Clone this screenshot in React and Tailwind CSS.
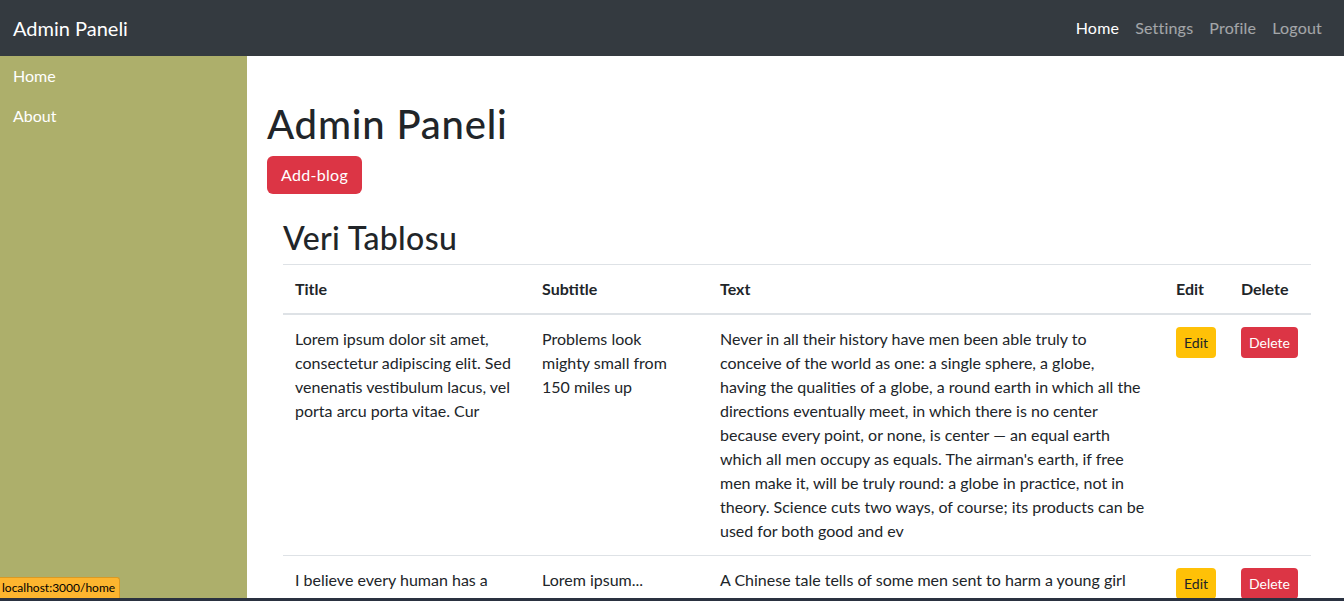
import React from 'react';

const rows = [
  {
    title: ['Lorem ipsum dolor sit amet,', 'consectetur adipiscing elit. Sed', 'venenatis vestibulum lacus, vel', 'porta arcu porta vitae. Cur'],
    subtitle: ['Problems look', 'mighty small from', '150 miles up'],
    text: [
      'Never in all their history have men been able truly to',
      'conceive of the world as one: a single sphere, a globe,',
      'having the qualities of a globe, a round earth in which all the',
      'directions eventually meet, in which there is no center',
      'because every point, or none, is center — an equal earth',
      "which all men occupy as equals. The airman's earth, if free",
      'men make it, will be truly round: a globe in practice, not in',
      'theory. Science cuts two ways, of course; its products can be',
      'used for both good and ev',
    ],
  },
  {
    title: ['I believe every human has a'],
    subtitle: ['Lorem ipsum...'],
    text: ['A Chinese tale tells of some men sent to harm a young girl'],
  },
];

const Lines = ({ lines }) => (
  <>
    {lines.map((l, i) => (
      <React.Fragment key={i}>
        {l}
        {i < lines.length - 1 && <br />}
      </React.Fragment>
    ))}
  </>
);

export default function App() {
  return (
    <div
      className="relative h-[601px] overflow-hidden flex flex-col bg-white text-[#212529] text-[16px] leading-6"
      style={{ fontFamily: '"Segoe UI", Lato, "Liberation Sans", sans-serif' }}
    >
      {/* navbar */}
      <nav className="h-14 shrink-0 bg-[#343a40] flex items-center justify-between pl-[13px] pr-[14px]">
        <span className="text-white text-[20px] leading-[30px]">Admin Paneli</span>
        <ul className="flex tracking-[0.2px]">
          <li className="px-2 text-white">Home</li>
          <li className="px-2 text-white/55">Settings</li>
          <li className="px-2 text-white/55">Profile</li>
          <li className="px-2 text-white/55">Logout</li>
        </ul>
      </nav>

      <div className="flex flex-1 min-h-0">
        {/* sidebar */}
        <aside className="w-[247px] shrink-0 bg-[#adaf6b] text-white">
          <div className="px-[13px] py-2">Home</div>
          <div className="px-[13px] py-2">About</div>
        </aside>

        {/* content */}
        <main className="flex-1 pl-5 pr-5 pt-[44px]">
          <h1 className="text-[40px] leading-[48px] font-medium tracking-[0.8px] mb-2">Admin Paneli</h1>
          <button className="bg-[#dc3545] text-white rounded-md px-[14px] tracking-[0.3px] h-[38px]">Add-blog</button>

          <div className="ml-4 mr-[13px]">
            <h2 className="text-[32px] leading-[38px] font-medium tracking-[0.35px] mt-[25px] mb-[7px]">Veri Tablosu</h2>
            <table className="w-full border-t border-[#dee2e6] border-collapse">
              <thead>
                <tr className="border-b-2 border-[#dee2e6] font-bold text-left">
                  <th className="w-[247px] p-3">Title</th>
                  <th className="w-[178px] p-3">Subtitle</th>
                  <th className="w-[456px] p-3">Text</th>
                  <th className="w-[65px] p-3">Edit</th>
                  <th className="p-3">Delete</th>
                </tr>
              </thead>
              <tbody>
                {rows.map((r, i) => (
                  <tr key={i} className="border-b border-[#dee2e6] align-top">
                    <td className="p-3"><Lines lines={r.title} /></td>
                    <td className="p-3"><Lines lines={r.subtitle} /></td>
                    <td className="p-3 whitespace-nowrap"><Lines lines={r.text} /></td>
                    <td className="p-3">
                      <button className="bg-[#ffc107] text-[#212529] text-[14px] leading-[21px] rounded px-2 py-[5px]">Edit</button>
                    </td>
                    <td className="p-3">
                      <button className="bg-[#dc3545] text-white text-[14px] leading-[21px] rounded px-2 py-[5px]">Delete</button>
                    </td>
                  </tr>
                ))}
              </tbody>
            </table>
          </div>
        </main>
      </div>

      {/* browser status bubble */}
      <div className="absolute left-0 bottom-[3px] h-[21px] w-[120px] bg-[#fdb52f] border-t border-r border-[#d99a24] rounded-tr-[3px] text-[12px] leading-[20px] pl-[2px] text-black">
        localhost:3000/home
      </div>
      <div className="absolute left-0 right-0 bottom-0 h-[3px] bg-[#2a3140]" />
    </div>
  );
}
